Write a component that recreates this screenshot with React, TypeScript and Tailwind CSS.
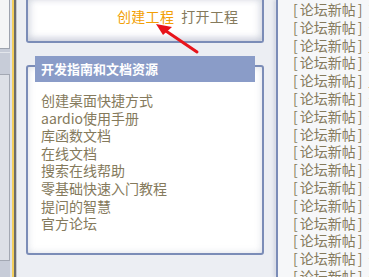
import * as React from "react"

const links = [
  "创建桌面快捷方式",
  "aardio使用手册",
  "库函数文档",
  "在线文档",
  "搜索在线帮助",
  "零基础快速入门教程",
  "提问的智慧",
  "官方论坛",
]

const tails = ["丁", "十", "_", "十", "_", "十", "十", "十", "十", "十", "十", "十", "十", "十", "十", "十"]

export default function App() {
  return (
    <div
      className="relative flex h-[277px] w-[369px] overflow-hidden bg-[#eceef3]"
      style={{ fontFamily: '"Noto Sans CJK SC", "Noto Sans", sans-serif' }}
    >
      {/* left side panel */}
      <div className="flex w-[10px] shrink-0 flex-col bg-[#c7ccd8]">
        <div className="h-[49px] border-b border-r border-[#9ea3ae] bg-[#f5f5f6]" />
        <div className="mt-[3px] h-px bg-[#e3e6ec]" />
        <div className="mt-[21px] h-[187px] border-y border-r border-[#a3a8b3] bg-[#dde0e7]" />
      </div>

      {/* splitter stripes */}
      <div className="w-[2px] shrink-0 bg-[#dfe2e9]" />
      <div className="w-[2px] shrink-0 bg-[#f4cf5c]" />
      <div className="w-[2px] shrink-0 bg-[#6c6c6c]" />
      <div className="w-px shrink-0 bg-[#c4c6cc]" />

      {/* main area */}
      <div className="flex w-[259px] shrink-0 flex-col pl-[9px]">
        <div className="flex h-[43px] w-[238px] items-start rounded-b-[3px] border-2 border-t-0 border-[#7b8cb7] bg-white pl-[89px] pt-[6px] text-[14px] leading-[20px] tracking-[0.3px] shadow-[inset_0_-4px_6px_rgba(130,140,170,0.25),inset_4px_0_6px_rgba(130,140,170,0.15),inset_-4px_0_6px_rgba(130,140,170,0.15)]">
          <span className="text-[#f29f05]">创建工程</span>
          <span className="ml-[7px] text-[#857a5c]">打开工程</span>
        </div>

        <div className="mt-[13px] flex flex-col">
          <div className="relative z-10 ml-[9px] flex h-[26px] w-[220px] items-center bg-[#8a9cc8] pl-[6px] text-[13px] font-bold text-white">
            开发指南和文档资源
          </div>
          <div className="-mt-[17px] h-[190px] w-[238px] rounded-[3px] border-2 border-[#7b8cb7] bg-white pl-[13px] pt-[25px] shadow-[inset_0_0_7px_rgba(130,140,170,0.3)]">
            {links.map((t) => (
              <div key={t} className="h-[17.6px] whitespace-nowrap text-[14px] leading-[17.6px] text-[#857a5c]">
                {t}
              </div>
            ))}
          </div>
        </div>
      </div>

      {/* right column */}
      <div className="w-[2px] shrink-0 bg-[#7b8cb7] shadow-[-2px_0_3px_rgba(130,140,170,0.3)]" />
      <div className="flex min-w-0 flex-1 flex-col overflow-hidden bg-[#f6f7f9] pl-[15px] pt-[1px]">
        {tails.map((c, i) => (
          <div key={i} className="flex h-[17.8px] whitespace-nowrap text-[14px] leading-[17.8px] text-[#857a5c]">
            <span className="pr-[2px]">[</span>
            <span>论坛新帖</span>
            <span className="pl-[2px]">]</span>
            <span className="pl-[6px]">{c}</span>
          </div>
        ))}
      </div>

      {/* annotation arrow */}
      <svg className="pointer-events-none absolute left-0 top-0" width="369" height="277">
        <line x1="197" y1="52" x2="163" y2="29" stroke="#e8141b" strokeWidth="3" strokeLinecap="round" />
        <polygon points="156,24 172,27 163,35" fill="#e8141b" />
      </svg>
    </div>
  )
}
